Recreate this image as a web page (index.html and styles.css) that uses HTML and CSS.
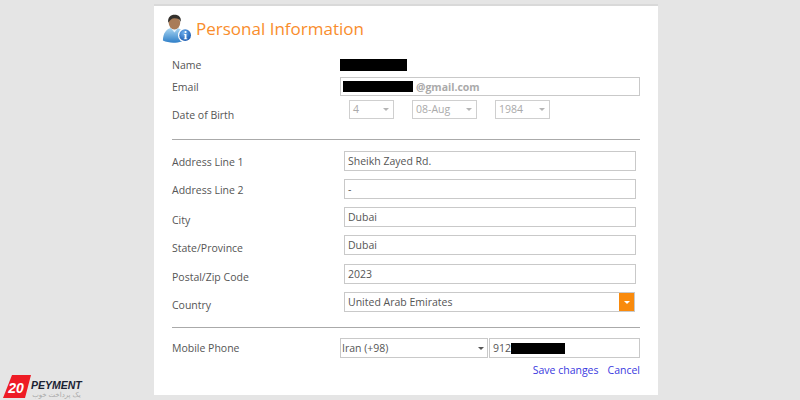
FILE: index.html
```html
<!DOCTYPE html>
<html lang="en">
<head>
<meta charset="utf-8">
<title>Personal Information</title>
<link rel="stylesheet" href="styles.css">
</head>
<body>
<main class="card">
  <header class="head">
    <svg class="avatar" width="32" height="30" viewBox="0 0 36 32" aria-hidden="true">
      <defs>
        <linearGradient id="shirt" x1="0" y1="0" x2="0" y2="1"><stop offset="0" stop-color="#a9d6f2"/><stop offset="1" stop-color="#2f7fc8"/></linearGradient>
        <radialGradient id="info" cx=".4" cy=".3" r=".8"><stop offset="0" stop-color="#6fb0ee"/><stop offset="1" stop-color="#0f4fa8"/></radialGradient>
      </defs>
      <path d="M1 29c0-8 4-13 9-14h7c5 1 9 5 9 12l-4 3c-6 2-15 2-21-1z" fill="url(#shirt)"/>
      <path d="M10 15l4 5 4-5-2-2h-4z" fill="#e6f2fb"/>
      <ellipse cx="14" cy="9" rx="6.5" ry="7.5" fill="#a97c58"/>
      <path d="M7 9C6 3 10 0 14 0c5 0 8 3 7 8-1-3-3-4-7-4-3 0-5 2-7 5z" fill="#33302c"/>
      <circle cx="26" cy="23" r="8" fill="#fff"/>
      <circle cx="26" cy="23" r="6.6" fill="url(#info)"/>
      <circle cx="26.5" cy="19.4" r="1.2" fill="#fff"/>
      <path d="M24.6 21.6h2.9v5h1v1h-4v-1h1v-4h-.9z" fill="#fff"/>
    </svg>
    <h1 class="title">Personal Information</h1>
  </header>

  <div class="row row-name">
    <span class="label">Name</span>
    <span class="value value-name"><span class="ink ink-name"></span></span>
  </div>
  <div class="row row-email">
    <label class="label">Email</label>
    <div class="field field-wide field-email"><span class="ink ink-email"></span><span class="suffix">@gmail.com</span></div>
  </div>
  <div class="row row-dob">
    <label class="label label-dob">Date of Birth</label>
    <div class="dob">
      <div class="pick pick-day"><span>4</span><i class="caret caret-pale"></i></div>
      <div class="pick pick-month"><span>08-Aug</span><i class="caret caret-pale"></i></div>
      <div class="pick pick-year"><span>1984</span><i class="caret caret-pale"></i></div>
    </div>
  </div>
  <hr class="rule rule-one">

  <div class="row row-addr"><label class="label label-mid">Address Line 1</label><div class="field field-addr">Sheikh Zayed Rd.</div></div>
  <div class="row row-addr"><label class="label label-mid">Address Line 2</label><div class="field field-addr">-</div></div>
  <div class="row row-addr"><label class="label label-low">City</label><div class="field field-addr">Dubai</div></div>
  <div class="row row-addr"><label class="label label-low">State/Province</label><div class="field field-addr">Dubai</div></div>
  <div class="row row-addr"><label class="label label-low">Postal/Zip Code</label><div class="field field-addr">2023</div></div>
  <div class="row row-addr">
    <label class="label label-low">Country</label>
    <div class="field field-addr field-combo"><span>United Arab Emirates</span><span class="combo-btn"><i class="caret caret-white"></i></span></div>
  </div>
  <hr class="rule rule-two">

  <div class="row row-phone">
    <label class="label">Mobile Phone</label>
    <div class="phone">
      <div class="field field-cc"><span>Iran (+98)</span><i class="caret caret-dark"></i></div>
      <div class="field field-num"><span>912</span><span class="ink ink-phone"></span></div>
    </div>
  </div>
  <nav class="actions"><a class="link" href="#">Save changes</a><a class="link" href="#">Cancel</a></nav>
</main>

<div class="brand">
  <span class="badge"><span class="badge-text">20</span></span>
  <div class="brand-text">
    <span class="brand-name">PEYMENT</span>
    <span class="brand-sub" lang="fa" dir="rtl">یک پرداخت خوب</span>
  </div>
</div>
</body>
</html>
```
FILE: styles.css
```css
* { box-sizing: border-box; }
html, body { margin: 0; height: 400px; overflow: hidden; }
body {
  position: relative;
  background: #e5e5e5;
  font-family: "Open Sans", "Noto Sans", sans-serif;
  font-size: 10.5px;
  color: #555;
  padding: 6px 0 0 154px;
}
.card {
  width: 504px;
  height: 389px;
  background: #fff;
  box-shadow: 0 -1px 0 1px #d9d9d9;
  clip-path: inset(-2px 0 -2px 0);
  padding: 0 18px;
  display: flex;
  flex-direction: column;
}
.head { display: flex; align-items: center; margin: 4px 0 0 -10px; height: 38px; }
.avatar { flex: none; }
.title { margin: -2px 0 0 2px; font-size: 17px; font-weight: 400; color: #f98d2c; }
.row { display: flex; align-items: center; }
.label { width: 168px; flex: none; }
.label-dob { padding-top: 12px; }
.label-mid { padding-top: 2px; }
.label-low { padding-top: 6px; }
.row-name { height: 18px; margin-top: 8px; }
.ink { display: inline-block; background: #000; }
.ink-name { width: 67px; height: 12px; display: block; }
.row-email { height: 19px; margin-top: 3px; }
.field {
  border: 1px solid #c9c9c9;
  background: #fff;
  display: flex;
  align-items: center;
  height: 20px;
  padding: 0 3px;
  color: #555;
}
.field-email { width: 300px; height: 19px; padding-left: 2px; }
.ink-email { width: 70px; height: 11px; }
.suffix { margin-left: 3px; color: #aaa; font-weight: 700; font-size: 10.5px; }
.row-dob { height: 20px; margin-top: 3px; }
.dob { display: flex; margin-left: 9px; gap: 18px; }
.pick {
  height: 19px;
  border: 1px solid #cfcfcf;
  color: #aaa;
  display: flex;
  align-items: center;
  justify-content: space-between;
  padding: 0 4px 0 3px;
}
.pick-day { width: 45px; }
.pick-month { width: 65px; }
.pick-year { width: 55px; }
.caret { width: 0; height: 0; border-left: 3px solid transparent; border-right: 3px solid transparent; border-top: 3px solid #555; flex: none; }
.caret-pale { border-top-color: #b5b5b5; }
.caret-dark { border-top-color: #555; }
.caret-white { border-top-color: #fff; }
.rule { width: 468px; height: 1px; margin: 0; border: 0; background: #aaa; flex: none; }
.rule-one { margin-top: 20px; }
.row-addr { height: 20px; margin-top: 8.3px; }
.rule-one + .row-addr { margin-top: 10.6px; }
.field-addr { width: 292px; margin-left: 4px; }
.field-combo { justify-content: space-between; padding-right: 0; width: 291px; }
.combo-btn { width: 15px; height: 18px; background: #f98a0c; display: flex; align-items: center; justify-content: center; }
.rule-two { margin-top: 15px; }
.row-phone { height: 20px; margin-top: 10px; }
.phone { display: flex; gap: 1px; }
.field-cc { width: 148px; justify-content: space-between; padding: 0 3px 0 1px; }
.field-num { width: 151px; }
.ink-phone { width: 54px; height: 11px; }
.actions { display: flex; justify-content: flex-end; gap: 9px; margin-top: 5px; line-height: 15px; }
.link { color: #3a3ae0; text-decoration: none; }
.brand { position: absolute; left: 3px; top: 375px; display: flex; align-items: flex-start; }
.badge {
  width: 28px; height: 23px;
  background: #ee1c25;
  clip-path: polygon(9px 0, 100% 0, 22px 100%, 0 100%);
  display: flex; align-items: center; justify-content: center;
}
.badge-text { color: #fff; font: italic 700 14px "Liberation Sans", sans-serif; margin-right: 2px; margin-top: 3px; }
.brand-text { display: flex; flex-direction: column; padding-top: 5px; }
.brand-name { font: italic 700 10.5px/11px "Liberation Sans", sans-serif; color: #1b2233; }
.brand-sub { font: 7px/8px "Noto Sans", "DejaVu Sans", sans-serif; color: #aaa; text-align: center; }
```
